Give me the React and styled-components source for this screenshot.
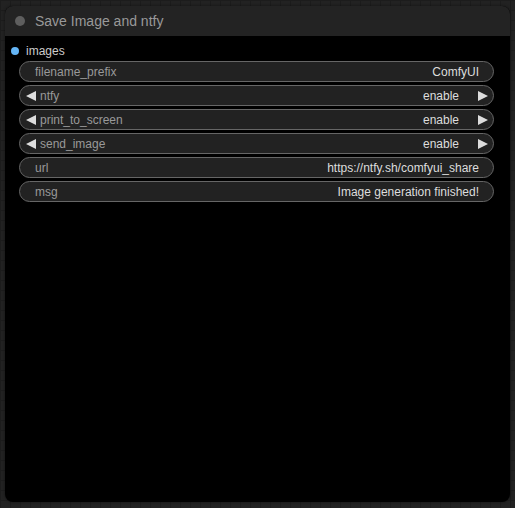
import styled, { createGlobalStyle } from 'styled-components'

const GlobalStyle = createGlobalStyle`
  html, body {
    margin: 0;
    padding: 0;
    background: #222;
  }
  body {
    font-family: "Liberation Sans", Arial, sans-serif;
  }
`

const Canvas = styled.div`
  width: 515px;
  height: 508px;
  box-sizing: border-box;
  padding: 6px 5px 6px 5px;
  background-color: #222;
  background-image:
    linear-gradient(to right, #1c1c1c 1px, transparent 1px),
    linear-gradient(to bottom, #1c1c1c 1px, transparent 1px);
  background-size: 10px 10px;
`

const Node = styled.div`
  height: 496px;
  display: flex;
  flex-direction: column;
  border-radius: 8px;
  overflow: hidden;
  background: #000;
  box-shadow: 0 0 3px rgba(0, 0, 0, 0.5);
`

const TitleBar = styled.div`
  height: 30px;
  flex-shrink: 0;
  display: flex;
  align-items: center;
  gap: 10px;
  padding-left: 10px;
  background: #232323;
  color: #999;
  font-size: 14px;
`

const TitleDot = styled.span`
  width: 10px;
  height: 10px;
  border-radius: 50%;
  background: #5e5e5e;
`

const Body = styled.div`
  display: flex;
  flex-direction: column;
  gap: 4px;
  padding: 9px 16px 0 14px;
`

const InputRow = styled.div`
  display: flex;
  align-items: center;
  gap: 7px;
  height: 12px;
  margin-left: -8px;
  color: #ccc;
  font-size: 12px;
`

const Slot = styled.span`
  width: 8px;
  height: 8px;
  border-radius: 50%;
  background: #64b5f6;
`

const Widgets = styled.div`
  display: flex;
  flex-direction: column;
  gap: 3px;
`

const Widget = styled.div`
  height: 21px;
  box-sizing: border-box;
  display: flex;
  align-items: center;
  padding: 0 ${(p) => (p.$combo ? '5px' : '14px')} 0 ${(p) => (p.$combo ? '6px' : '15px')};
  border: 1px solid #666;
  border-radius: 11px;
  background: #222;
  font-size: 12px;
`

const Label = styled.span`
  color: #999;
  flex: 1;
`

const Value = styled.span`
  color: #ddd;
  margin-right: ${(p) => (p.$combo ? '19px' : '0')};
`

const Arrow = styled.svg`
  width: 10px;
  height: 10px;
  fill: #ddd;
  flex-shrink: 0;
  margin-right: ${(p) => (p.$left ? '4px' : '0')};
`

const LeftArrow = () => (
  <Arrow $left viewBox="0 0 10 10"><polygon points="0,5 10,0 10,10" /></Arrow>
)
const RightArrow = () => (
  <Arrow viewBox="0 0 10 10"><polygon points="10,5 0,0 0,10" /></Arrow>
)

const widgets = [
  { label: 'filename_prefix', value: 'ComfyUI' },
  { label: 'ntfy', value: 'enable', combo: true },
  { label: 'print_to_screen', value: 'enable', combo: true },
  { label: 'send_image', value: 'enable', combo: true },
  { label: 'url', value: 'https://ntfy.sh/comfyui_share' },
  { label: 'msg', value: 'Image generation finished!' },
]

export default function App() {
  return (
    <>
      <GlobalStyle />
      <Canvas>
        <Node>
          <TitleBar>
            <TitleDot />
            Save Image and ntfy
          </TitleBar>
          <Body>
            <InputRow>
              <Slot />
              images
            </InputRow>
            <Widgets>
              {widgets.map((w) => (
                <Widget key={w.label} $combo={w.combo}>
                  {w.combo && <LeftArrow />}
                  <Label>{w.label}</Label>
                  <Value $combo={w.combo}>{w.value}</Value>
                  {w.combo && <RightArrow />}
                </Widget>
              ))}
            </Widgets>
          </Body>
        </Node>
      </Canvas>
    </>
  )
}
